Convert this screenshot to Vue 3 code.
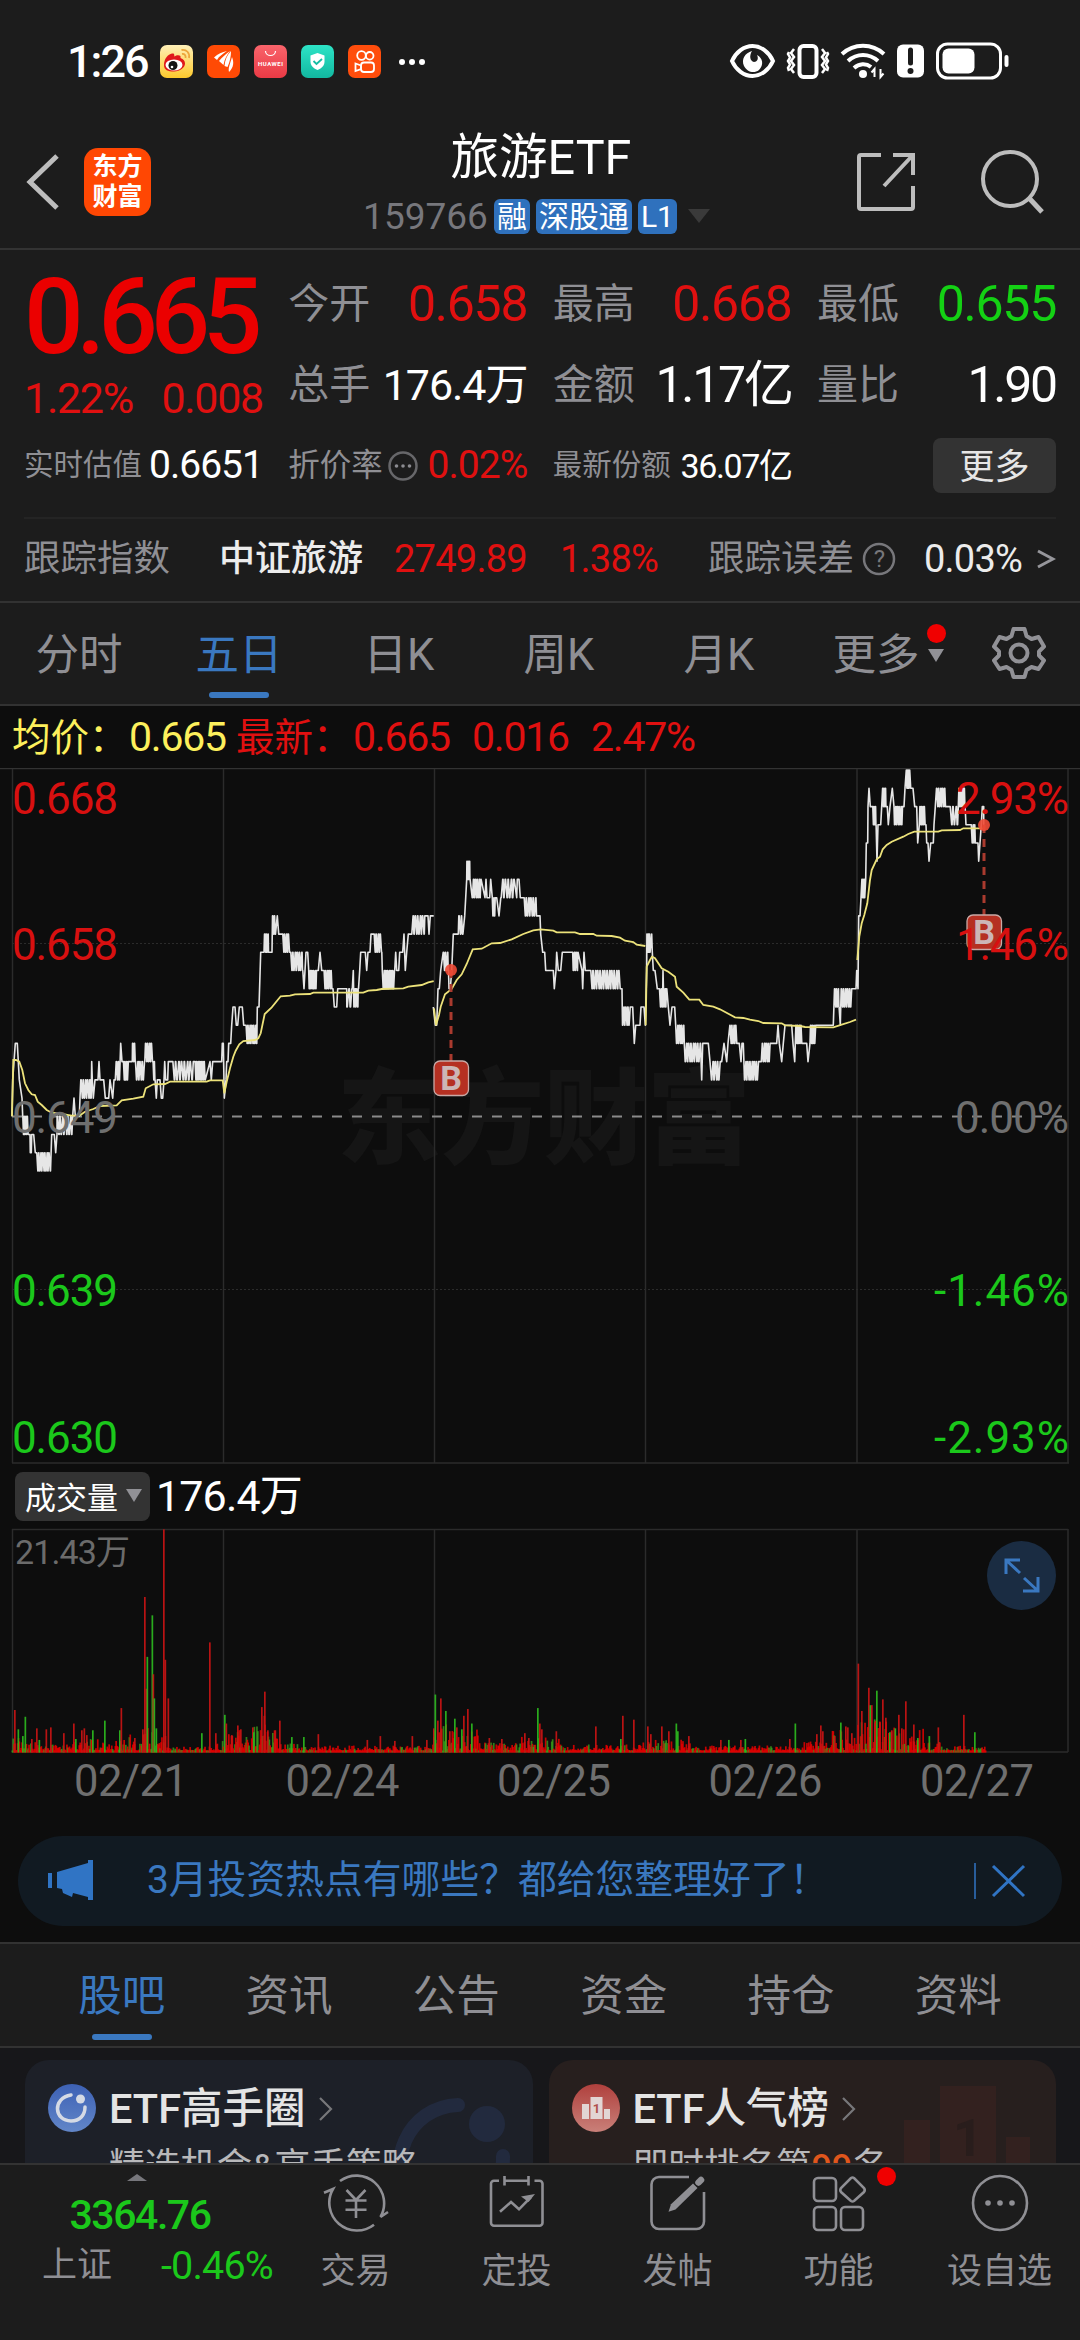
<template>
  <div class="screen">
    <header class="status">
      <div class="status__left">
        <span class="status__time">1:26</span>
        <svg class="status__app" viewBox="0 0 33 33">
          <defs>
            <linearGradient id="weibo" x2="0" y2="1">
              <stop stop-color="#fff0b8" />
              <stop offset="1" stop-color="#fdc92c" />
            </linearGradient>
          </defs>
          <rect width="33" height="33" rx="7" fill="url(#weibo)" />
          <path d="M4 20C4 14 8 9 12 8.500c3-.5 2 2 2.500 3 2-1.500 7-2 6 1.500 3 1 4.500 3 4.500 5.500 0 4-5 8-11 8S4 25 4 20z" fill="#e0181b" />
          <ellipse cx="14" cy="20" rx="8.500" ry="5.500" fill="#fff" />
          <circle cx="13" cy="20.500" r="4.500" fill="#151515" />
          <circle cx="12" cy="22" r="1.300" fill="#fff" />
          <path d="M22 9c2.500-.5 4 1.500 3.500 4M21.500 5c5-1 8.500 3 7.500 8" fill="none" stroke="#eda63a" stroke-width="1.800" />
        </svg>
        <svg class="status__app" viewBox="0 0 33 33">
          <rect width="33" height="33" rx="7" fill="#ff4a05" />
          <path d="M7 12.500c4-4 8-5.500 13-6.500-4 3-8 5-10 9zM12 16c3-4 7-7 11-10-3 4-5.500 8-6.500 14zM17.500 21C18 15 20 10 24 6c0 5-1 11-3.500 16zM22 27c-1-4 1-8 3-15 2 5 2 10-3 15z" fill="#fff" />
        </svg>
        <svg class="status__app" viewBox="0 0 33 33">
          <defs>
            <linearGradient id="huawei" x2="0" y2="1">
              <stop stop-color="#f9646b" />
              <stop offset="1" stop-color="#ea3a45" />
            </linearGradient>
          </defs>
          <rect width="33" height="33" rx="7" fill="url(#huawei)" />
          <path d="M11.500 6c0 6 10 6 10 0" fill="none" stroke="#fff" stroke-width="1.200" />
          <text x="16.500" y="21" text-anchor="middle" font-size="6" font-weight="700" fill="#fff" textLength="25">HUAWEI</text>
        </svg>
        <svg class="status__app" viewBox="0 0 33 33">
          <defs>
            <linearGradient id="guard" x2="0" y2="1">
              <stop stop-color="#2de3c6" />
              <stop offset="1" stop-color="#12b8a0" />
            </linearGradient>
          </defs>
          <rect width="33" height="33" rx="7" fill="url(#guard)" />
          <path d="M16.500 8l7 2.500v6c0 4-2.500 6.500-7 8.500-4.500-2-7-4.500-7-8.500v-6z" fill="#fff" />
          <path d="M12.500 16l3 3 5.500-5" fill="none" stroke="#16bda5" stroke-width="1.800" />
        </svg>
        <svg class="status__app" viewBox="0 0 33 33">
          <rect width="33" height="33" rx="7" fill="#ff4d0c" />
          <g fill="none" stroke="#fff" stroke-width="1.800">
            <circle cx="13.500" cy="10.500" r="4.300" />
            <circle cx="21.700" cy="10.800" r="3.800" />
            <rect x="13" y="17.500" width="13" height="9.500" rx="3" />
            <path d="M13 20.500l-5.500-2v7.500l5.500-2z" />
          </g>
        </svg>
        <span class="status__more"><i></i><i></i><i></i></span>
      </div>
      <svg class="status__right" width="282" height="40" viewBox="728 41 282 40">
        <path d="M732 61c4-9 12-15 20.500-15S769 52 773 61c-4 9-12 15-20.500 15S736 70 732 61z" fill="none" stroke="#fff" stroke-width="4" />
        <path d="M752 51c-7 2-11 8-8 15 3 6 10 8 15 4 5-5 4-12-2-15 2 4 0 7-3 7-4-1-5-6-2-11z" fill="#fff" />
        <rect x="799.500" y="46" width="17" height="31" rx="4" fill="none" stroke="#fff" stroke-width="4" />
        <path d="M794 49l-3 4 3 4-3 4 3 4-3 4 3 4M789 52l-1 2 2 3.500-2 3.500 2 3.500-2 3.500 1 3M822 49l3 4-3 4 3 4-3 4 3 4-3 4M827 52l1 2-2 3.500 2 3.500-2 3.500 2 3.500-1 3" fill="none" stroke="#fff" stroke-width="2.500" />
        <g fill="none" stroke="#fff" stroke-width="4">
          <path d="M842 54c12-11 30-11 42 0" />
          <path d="M848 61c9-8 21-8 30 0" />
          <path d="M854 68c5-4.500 12-5 17-1" />
        </g>
        <circle cx="863" cy="74" r="4" fill="#fff" />
        <path d="M874.500 77v-8l-3 3.500M880.500 69v8l3-3.500" fill="none" stroke="#fff" stroke-width="2" />
        <rect x="897" y="44.500" width="27" height="33" rx="6" fill="#fff" />
        <path d="M910.500 50v13" stroke="#1c1c1c" stroke-width="5" stroke-linecap="round" />
        <circle cx="910.500" cy="71" r="3" fill="#1c1c1c" />
        <rect x="937.500" y="44" width="63" height="34" rx="10" fill="none" stroke="#fff" stroke-width="3" />
        <rect x="942.500" y="48.500" width="32" height="25" rx="6" fill="#fff" />
        <path d="M1006.500 57v8" stroke="#fff" stroke-width="4" stroke-linecap="round" />
      </svg>
    </header>

    <div class="header">
      <div class="header__side">
        <svg width="34" height="58" viewBox="0 0 34 58">
          <path d="M32 3L5 29l27 26" fill="none" stroke="#bdbdbd" stroke-width="5" />
        </svg>
        <div class="header__logo"><span>东方</span><span>财富</span></div>
      </div>
      <div class="header__title">
        <h1>旅游ETF</h1>
        <p>
          <span class="header__code">159766</span>
          <b>融</b><b>深股通</b><b>L1</b>
          <i class="arrow"></i>
        </p>
      </div>
      <div class="header__side header__side--right">
        <svg width="60" height="60" viewBox="0 0 60 60" fill="none" stroke="#bdbdbd" stroke-width="4">
          <path d="M25 3H5a2 2 0 00-2 2v50a2 2 0 002 2h50a2 2 0 002-2V34M37 3h20v20M56 4L28 34" />
        </svg>
        <svg width="64" height="64" viewBox="0 0 64 64" fill="none" stroke="#bdbdbd" stroke-width="4">
          <circle cx="30" cy="29" r="27" />
          <path d="M49 48l13 14" stroke-width="5" />
        </svg>
      </div>
    </div>

    <section class="quote">
      <div class="quote__grid">
        <div class="quote__main">
          <strong>0.665</strong>
          <p><span>1.22%</span><span>0.008</span></p>
        </div>
        <div v-for="item in stats" :key="item.label" class="stat">
          <span class="stat__label">{{ item.label }}</span>
          <span class="stat__value" :class="item.cls">{{ item.value }}</span>
        </div>
        <div class="stat stat--small">
          <span class="stat__label">实时估值</span><span class="stat__value mid">0.6651</span>
        </div>
        <div class="stat stat--small">
          <span class="stat__label stat__label--wide">折价率</span>
          <svg class="stat__hint" width="30" height="30" viewBox="0 0 30 30">
            <circle cx="15" cy="15" r="13.500" fill="none" stroke="#67676a" stroke-width="2.500" />
            <g fill="#8b8b90"><circle cx="8.500" cy="15" r="1.800" /><circle cx="15" cy="15" r="1.800" /><circle cx="21.500" cy="15" r="1.800" /></g>
          </svg>
          <span class="stat__value red mid">0.02%</span>
        </div>
        <div class="stat stat--small">
          <span class="stat__label">最新份额</span><span class="stat__value tiny">36.07亿</span>
        </div>
        <div class="stat stat--end"><button class="quote__more">更多</button></div>
      </div>
      <div class="track">
        <span class="track__label">跟踪指数</span>
        <span class="track__name">中证旅游</span>
        <span class="red track__num">2749.89</span>
        <span class="red track__pct">1.38%</span>
        <span class="track__label">跟踪误差</span>
        <svg class="track__hint" width="34" height="34" viewBox="0 0 34 34">
          <circle cx="17" cy="17" r="15" fill="none" stroke="#77777b" stroke-width="2.500" />
          <text x="17" y="25" text-anchor="middle" font-size="24" fill="#77777b">?</text>
        </svg>
        <span class="track__err">0.03%</span>
        <svg class="track__go" width="20" height="20" viewBox="0 0 20 20">
          <path d="M2 2l15 8-15 8" fill="none" stroke="#96969b" stroke-width="3" />
        </svg>
      </div>
    </section>

    <nav class="periods">
      <span v-for="p in periods" :key="p" :class="{ active: p === '五日' }">{{ p }}</span>
      <span class="periods__more">更多<i class="arrow"></i><em class="dot"></em></span>
      <svg width="54" height="54" viewBox="0 0 54 54" fill="none" stroke="#919196" stroke-width="4" stroke-linejoin="round">
        <path d="M21.500 3h11l2 7 5 3 7-2 5.500 9.500-5 5v4l5 5L46.500 43l-7-2-5 3-2 7h-11l-2-7-5-3-7 2L2 34.500l5-5v-4l-5-5L7.500 11l7 2 5-3z" />
        <circle cx="27" cy="27" r="8.500" />
      </svg>
    </nav>

    <section class="market">
      <div class="legend">
        <span class="legend__cn yellow">均价：</span><span class="legend__num legend__avg yellow">0.665</span>
        <span class="legend__cn red">最新：</span><span class="legend__num red">0.665</span>
        <span class="legend__num red">0.016</span><span class="legend__num red">2.47%</span>
      </div>

      <svg class="chart" width="1080" height="698" viewBox="0 768 1080 698">
        <text x="337" y="1156" textLength="414" font-size="104" font-weight="900" fill="#151515">东方财富</text>
        <g stroke="#2b2b2b" stroke-width="1.500">
          <path d="M0 768.500H1080" stroke="#333" />
          <path v-for="x in dayEdges" :key="x" :d="`M${x} 769V1463`" />
          <path d="M12 1463H1069" />
          <path d="M12 943.500H1068M12 1289.500H1068" stroke-dasharray="2 2" stroke-width="1" />
        </g>
        <path d="M12 1116.500H1068" stroke="#8a8a8a" stroke-width="2" stroke-dasharray="10 10" />
        <path v-for="(d, i) in priceLines" :key="'p' + i" :d="d" class="chart__price" />
        <path v-for="(d, i) in avgLines" :key="'a' + i" :d="d" class="chart__avg" />
        <g v-for="m in marks" :key="m.x">
          <path :d="`M${m.x} ${m.top}V${m.box}`" stroke="#a93a2e" stroke-width="3" stroke-dasharray="8 6" />
          <circle :cx="m.x" :cy="m.top" r="6" fill="#f04a35" fill-opacity=".9" />
          <rect :x="m.x - 17" :y="m.box" width="34.500" height="34.500" rx="6" fill="#b53022" stroke="#c9a9a6" stroke-width="1.300" />
          <text :x="m.x" :y="m.box + 29" text-anchor="middle" font-size="34" font-weight="700" fill="#ccb6b6">B</text>
        </g>
        <g font-size="44">
          <template v-for="r in scale" :key="r.price">
            <text x="12" :y="r.y" textLength="106" :fill="r.color">{{ r.price }}</text>
            <text x="1069" :y="r.y" text-anchor="end" :textLength="r.w" :fill="r.color">{{ r.pct }}</text>
          </template>
        </g>
      </svg>

      <div class="volhead">
        <button>成交量<i class="arrow"></i></button>
        <span>176.4万</span>
      </div>

      <div class="volume">
        <svg width="1080" height="227" viewBox="0 1527 1080 227">
          <g stroke="#2b2b2b" stroke-width="1.500">
            <path d="M12 1529.500H1068M12 1752H1068" />
            <path v-for="x in dayEdges" :key="x" :d="`M${x} 1529V1752`" />
          </g>
          <rect v-for="(b, i) in bars" :key="i" :x="b.x" :y="1752.5 - b.h" width="1.700" :height="b.h" :fill="b.c" :fill-opacity="b.o" />
          <text x="15" y="1564" font-size="34" textLength="115" fill="#6b6b6b">21.43万</text>
        </svg>
        <button class="volume__expand">
          <svg width="36" height="36" viewBox="0 0 36 36" fill="none" stroke="#3a78c0" stroke-width="3">
            <path d="M2 17V3h14M3 4l13 12M34 20v14H19M33 33L20 21" />
          </svg>
        </button>
      </div>
      <div class="dates"><span v-for="d in dates" :key="d">{{ d }}</span></div>

      <div class="banner">
        <svg width="46" height="42" viewBox="0 0 46 42" fill="#3074c4">
          <path d="M0 13h4v15H0zM9 12L40 3V0h5v40h-5v-3l-15-4-1 4-9-4-1-4-5-1z" />
        </svg>
        <p>3月投资热点有哪些？都给您整理好了！</p>
        <svg class="banner__close" width="52" height="38" viewBox="0 0 52 38" fill="none" stroke="#3074c4">
          <path d="M1 1v36" stroke-width="1.500" />
          <path d="M19 4l31 30M50 4L19 34" stroke-width="3" />
        </svg>
      </div>
    </section>

    <nav class="sections">
      <span v-for="s in sections" :key="s" :class="{ active: s === '股吧' }">{{ s }}</span>
    </nav>

    <section class="cards">
      <article class="card card--blue">
        <svg class="card__ghost" width="150" height="130" viewBox="0 0 150 130">
          <path d="M75 23C25 25 0 80 28 130" fill="none" stroke="#222a3e" stroke-width="14" stroke-linecap="round" />
          <path d="M120 74c0 22-5 38-20 54" fill="none" stroke="#222a3e" stroke-width="14" stroke-linecap="round" />
          <circle cx="104" cy="42" r="18" fill="#222a3e" />
        </svg>
        <svg class="card__icon" viewBox="0 0 48 48">
          <defs>
            <linearGradient id="ring" x2="0" y2="1">
              <stop stop-color="#3d61b5" />
              <stop offset="1" stop-color="#6286c8" />
            </linearGradient>
          </defs>
          <circle cx="24" cy="24" r="24" fill="url(#ring)" />
          <path d="M23 11C4 14 6 37 23 37c9 0 14-6 14-14" fill="none" stroke="#d5dae5" stroke-width="3.500" stroke-linecap="round" />
          <circle cx="32.500" cy="15" r="4.500" fill="#d5dae5" />
        </svg>
        <div>
          <h2>ETF高手圈<svg width="16" height="24" viewBox="0 0 16 24"><path d="M2 1l11 11L2 23" fill="none" stroke="#77777a" stroke-width="2.200" /></svg></h2>
          <p>精选机会&amp;高手策略</p>
        </div>
      </article>
      <article class="card card--red">
        <svg class="card__ghost" width="170" height="130" viewBox="0 0 170 130" fill="#33211f">
          <path d="M18 60h26v70H18zM54 26h56v104H54zM120 77h24v53h-24z" />
          <text x="82" y="96" font-size="52" font-weight="700" text-anchor="middle" fill="#291d1c">1</text>
        </svg>
        <svg class="card__icon" viewBox="0 0 48 48">
          <defs>
            <linearGradient id="rank" x2="0" y2="1">
              <stop stop-color="#b0403d" />
              <stop offset="1" stop-color="#c98079" />
            </linearGradient>
          </defs>
          <circle cx="24" cy="24" r="24" fill="url(#rank)" />
          <path d="M10 20h7v15h-7zM18.500 13h12v22h-12zM32 25h6v10h-6z" fill="#e2d5d4" />
          <text x="24.500" y="29" font-size="13" font-weight="700" text-anchor="middle" fill="#b0504b">1</text>
        </svg>
        <div>
          <h2>ETF人气榜<svg width="16" height="24" viewBox="0 0 16 24"><path d="M2 1l11 11L2 23" fill="none" stroke="#77777a" stroke-width="2.200" /></svg></h2>
          <p>即时排名第<b>99</b>名</p>
        </div>
      </article>
    </section>

    <footer class="tabbar">
      <div class="tabbar__index">
        <i class="tabbar__up"></i>
        <strong>3364.76</strong>
        <p><span>上证</span><em>-0.46%</em></p>
      </div>
      <div class="tabbar__item">
        <svg viewBox="0 0 66 60">
          <path d="M17 7A27.700 27.700 0 0157.500 43l7.500-5M51 50.700A27.700 27.700 0 0110 15l-9 3.700" />
          <path d="M23.500 16l9.500 10 9.500-10M33 26v18M22.500 26.500h21M22.500 35.700h21" />
        </svg>
        <span>交易</span>
      </div>
      <div class="tabbar__item">
        <svg viewBox="0 0 66 60">
          <path d="M15 6.700h-5a3 3 0 00-3 3v39a3 3 0 003 3h45.500a3 3 0 003-3v-39a3 3 0 00-3-3h-5M20.500 2v9.500M44.500 2v9.500M20.500 6.700h24M16 37.700L27 28l8 7.300L47 23" />
          <path d="M37 22.500l14-2.500-6.500 8z" fill="#8f8f94" stroke="none" />
        </svg>
        <span>定投</span>
      </div>
      <div class="tabbar__item">
        <svg viewBox="0 0 66 60">
          <path d="M44 3H14a7.500 7.500 0 00-7.500 7.500v37A7.500 7.500 0 0014 55h37.500a7.500 7.500 0 007.500-7.500V18" />
          <path d="M23.500 37.700l2.500-7.500L48 9.500l4.500 4.500-22 21.500z" fill="#8f8f94" stroke="none" />
          <path d="M53.500 8.500l2.500-2.500" stroke-width="6.500" stroke-linecap="round" />
        </svg>
        <span>发帖</span>
      </div>
      <div class="tabbar__item">
        <svg viewBox="0 0 66 60">
          <rect x="8" y="4" width="22" height="23" rx="4" />
          <rect x="8" y="33" width="22" height="23" rx="4" />
          <rect x="35" y="33" width="22" height="23" rx="4" />
          <path d="M45 4q1.500-1 3 0l10 10q1.500 2 0 4L48 27q-1.500 1-3 0L35 18q-1.500-2 0-4z" />
        </svg>
        <em class="dot"></em>
        <span>功能</span>
      </div>
      <div class="tabbar__item">
        <svg viewBox="0 0 66 60">
          <circle cx="33" cy="29" r="27" />
          <g fill="#8f8f94" stroke="none"><circle cx="21" cy="29" r="2.800" /><circle cx="33" cy="29" r="2.800" /><circle cx="45" cy="29" r="2.800" /></g>
        </svg>
        <span>设自选</span>
      </div>
    </footer>
  </div>
</template>

<script setup>
const stats = [
  { label: "今开", value: "0.658", cls: "red" },
  { label: "最高", value: "0.668", cls: "red" },
  { label: "最低", value: "0.655", cls: "green" },
  { label: "总手", value: "176.4万", cls: "compact" },
  { label: "金额", value: "1.17亿", cls: "wide" },
  { label: "量比", value: "1.90", cls: "wide" },
];
const periods = ["分时", "五日", "日K", "周K", "月K"];
const sections = ["股吧", "资讯", "公告", "资金", "持仓", "资料"];
const dates = ["02/21", "02/24", "02/25", "02/26", "02/27"];
const dayEdges = [12.5, 223.5, 434.5, 645.5, 857, 1068];

const RED = "#d81010";
const GREEN = "#1bc81b";
const GREY = "#6f6f6f";
const scale = [
  { price: "0.668", pct: "2.93%", y: 814, w: 113, color: RED },
  { price: "0.658", pct: "1.46%", y: 960, w: 113, color: RED },
  { price: "0.649", pct: "0.00%", y: 1132.5, w: 114, color: GREY },
  { price: "0.639", pct: "-1.46%", y: 1306, w: 135, color: GREEN },
  { price: "0.630", pct: "-2.93%", y: 1452.5, w: 135, color: GREEN },
];
const marks = [
  { x: 451, top: 970, box: 1061 },
  { x: 984, top: 825, box: 915 },
];

// Each token is "x,level"; "x1-x2,a,b,n" swings n times between levels a and b.
// Level 0 is yesterday's close, one level is 0.001.
const priceData = [
  [0, "36,0 38,2 46,4 52,4 58,2 66,1 68,0 68-84,0,-1,4 90,-1 91,-2 94,-2 95,-1 101,-1 106,-2 110-150,-2,-3,7 155,-1 163,-1 167,-2 171,-1 172-215,0,-1,6 218,0 222,1 226,0 238,0 240,1 243-273,2,1,5 275,3 277,2 280,1 285,2 294,2 297,3 300,2 311,2 316,1 326,1 330,2 338,1 342,2 346,2 349-358,3,2,2 362,4 366,3 370-382,3,2,3 385,3 397,3 398-406,4,3,2 410-433,2,3,4 437-457,4,3,4 459-465,3,2,2 469,1 472,2 480,2 484,1 488,1 492,2 494,3 497,2 503,2 505,3 518-575,3,2,7 580,3 585-615,3,2,7 630,3 634,2 638,3 665,3 667,4 670,4 673,1 678,2 680,3 684,3 686,4 692,4 695,5 699,6 705,6 709,5 713,5 718,6 727,6 731,5 738-770,5,4,6 772,6 777,6 782,9 792,9 794-806,10,9,3 816,9 818-826,11,10,2 832,11 836,10 848-868,10,9,4 872-908,9,8,6 912,7 915,8 918,9 923,9 926,8 928-950,7,8,5 955,8 960,9 965,8 972-996,8,7,5 999,7 1003,6 1010,6 1013,7 1040,7 1041-1056,6,7,2 1060,8 1062-1075,6,7,3 1079,8 1082,9 1096,9 1100,8 1104,9 1110,9 1113,10 1122-1144,10,9,4 1147,8 1150-1183,7,8,7 1187,9 1190,8 1196,8 1199,9 1208,9 1212,10 1216,8 1220,9 1225,10 1235-1275,10,11,6 1284,11 1287,10 1291,11 1301,11"],
  [420, "40,6 46,5 50,5 54,7 58,7 62,8 70-85,9,8,3 87,7 91,7 95,8 100,10 115,10 117-128,11,10,2 134,11 137,12 140,13 141-150,14,13,3 157-183,12,13,5 195,12 198,13 201,12 209,12 212,13 217,12 219-226,11,12,2 230,12 237,11 243-282,12,13,5 290,12 292,13 297,13 301,12 312-350,12,11,6 360,11 362,10 368,9 374,9 377,8 400,8 403,7 408,8 410,9 415,8 422,8 427,9 458,9 460-474,8,9,3 486,8 488,7 492,9 496,8 509,8 512-600,8,7,13 606,7 608-630,5,6,4 638,6 643,4 647,5 660,5 663,6 672,6 676,5 680,8 681-690,10,9,3 695,10 697,9 700,8 705,8 712,7 718-727,7,6,2 729,8 732-740,6,7,2 745,6 750,5 756,6 764,6 767,5 770-790,4,5,4 793,4 796-840,3,4,7 845,2 848,4 865,4 870,3 875-900,2,3,4 905,3 912,4 920,3 924,4 930-950,5,4,4 958,4 963,3 966,4 970,4 974-1015,2,3,7 1020,3 1024,3 1027,4 1030-1050,3,4,4 1070,4 1074,5 1078,4 1085,3 1090,4 1095,5 1115,5 1119,4 1124,3 1128-1145,5,4,4 1160,4 1164,3 1170,4 1172-1184,5,4,3 1187,5 1240,5 1244-1257,7,6,3 1261,5 1264-1292,7,6,5 1295,7 1308,7 1310,8 1314,7 1316,11 1320,11 1323,12 1326-1334,13,12,3 1337,13 1339,15 1343,15 1344,17 1347,18 1351,17 1358-1368,17,16,3 1371,14 1374,16 1382,16 1385,17 1388-1398,18,17,3 1402,17 1405,16 1410,17 1417,18 1422,17 1424-1448,16,17,5 1452,17 1455,18 1459-1467,19,18,3 1469,19 1472,18 1479,18 1484,17 1490,17 1493,15 1498,16 1500-1515,17,16,4 1518,16 1520,15 1524,15 1527,14 1532,15 1540,15 1542,16 1546,17 1550-1577,18,17,5 1590-1612,17,16,3 1615,17 1617-1635,18,17,5 1638,16 1654,16 1657-1664,15,16,2 1666,15 1674,15 1676,14 1680,15 1684,16 1687,17 1691,17 1691,16"],
];

function toPath(offset, data) {
  const pts = [];
  for (const token of data.split(" ")) {
    const m = token.match(/^(\d+)-(\d+),(-?\d+),(-?\d+),(\d+)$/);
    if (!m) {
      pts.push(token.split(",").map(Number));
      continue;
    }
    const [x1, x2, a, b, n] = m.slice(1).map(Number);
    const step = (x2 - x1) / (n * 2 - 1);
    for (let i = 0; i < n * 2; i++) {
      // uneven rhythm, every third swing leans to one side
      const x = x1 + i * step + (i % 3 === 1 ? step * 0.3 : 0);
      const level = i % 2 ? b : a;
      pts.push([x - step * 0.15, level], [x + step * 0.15, level]);
    }
  }
  return "M" + pts.map(([x, k]) => `${(offset + x / 3).toFixed(1)} ${(1116.3 - k * 18.22).toFixed(1)}`).join("L");
}
const priceLines = priceData.map(([offset, data]) => toPath(offset, data));

const avgData = [
  [0, "36,1069 40,900 48,900 58,905 67,930 75,970 85,990 95,1003 105,1005 113,1025 125,1035 140,1050 155,1058 185,1062 215,1067 240,1066 255,1055 280,1047 300,1038 350,1036 365,1021 400,1016 430,1010 437,985 460,973 495,972 510,965 620,965 630,961 668,961 673,1000 680,965 690,925 700,890 707,872 718,853 730,843 765,840 775,835 782,820 794,762 815,742 842,709 870,707 885,703 930,702 940,698 1090,698 1105,692 1130,690 1145,687 1210,685 1225,680 1265,675 1285,667 1301,663"],
  [420, "42,745 48,796 57,765 62,740 75,703 95,687 110,660 125,643 140,612 158,568 185,566 215,550 240,549 275,538 310,522 340,511 362,508 400,512 410,517 465,517 480,522 520,522 530,527 575,528 600,533 615,542 640,546 650,554 676,558"],
  [420, "677,796 680,620 690,600 696,590 705,595 725,625 745,635 765,650 770,680 790,698 808,719 838,719 850,735 880,740 900,748 945,772 970,774 990,779 1015,783 1030,789 1085,790 1095,796 1140,798 1155,801 1240,802 1265,794 1290,786 1308,779"],
  [780, "232,600 238,530 245,490 253,465 262,430 270,360 275,330 290,298 300,290 308,268 320,255 335,245 370,230 385,222 403,215 475,215 485,211 540,210 550,205 608,205"],
];
const avgLines = avgData.map(
  ([offset, data]) =>
    "M" +
    data
      .split(" ")
      .map((p) => p.split(",").map(Number))
      .map(([x, y]) => `${(offset + x / 3).toFixed(1)} ${(760 + y / 3).toFixed(1)}`)
      .join("L")
);

// Quiet minutes: low bars with a busier level in some ranges, [from, to, max height].
const activity = [
  [12, 40, 13], [40, 70, 6], [70, 100, 12], [100, 120, 10], [120, 142, 16], [142, 150, 28], [150, 160, 20],
  [160, 166, 18], [166, 210, 4], [210, 224, 12], [224, 250, 22], [250, 278, 26], [278, 300, 8], [300, 430, 5],
  [430, 480, 28], [480, 515, 8], [515, 540, 14], [540, 560, 13], [560, 640, 6], [640, 690, 11], [690, 800, 5],
  [800, 830, 9], [830, 856, 22], [856, 870, 34], [870, 895, 32], [895, 925, 22], [925, 945, 9], [945, 985, 5],
];
let seed = 37;
function rand() {
  seed = (seed * 16807) % 2147483647;
  return seed / 2147483647;
}
const bars = [];
for (let x = 11.5; x < 985.5; x += 0.88) {
  const max = activity.find(([a, b]) => x < b)?.[2] ?? 4;
  const h = 2 + Math.pow(rand(), 2) * max;
  const up = rand() < 0.76;
  bars.push({ x: x.toFixed(1), h, c: up ? "#e60000" : "#3ba51b", o: up ? 0.85 : 0.75 });
}
// Tall bars, "x,height"; a trailing g marks a falling minute.
const spikes =
  "14,44 17.5,24g 22,17g 24.5,37g 31,14 36,25 38.5,13g 45.5,24 50,26 63,20 73,30 75,14g 81,23 83.5,25 86,18 92,23g 104,33g 119,23g 120.5,46 134,15 142,24 144,161 145.5,66 146.5,99g 151.5,142g 152.5,81 153.5,56g 155.5,25g 163,231 164.5,96 167.5,56 201,20g 209,114 215,20 224,39g 225.5,30 231,18 237,28 240,24 252,26 253,21g 261,47 263.5,38 264,63 267,23 274.5,23 279,33 291,16g 303,16g 317.5,19 366.5,13 379.5,17 394,12 411.5,17 426,13 433,25 434.5,60g 437,33 440,56 445,43g 449,22 454,35g 456,26 461,24g 463,38 467,45 471,30g 488.5,15 501,14 524,20 528,15 537,46g 539,30 541,24 555.5,22 595,27 620,14g 622,38 633,34 647,27 650,19 661,27 668,22 675.5,30g 677,22g 688,17 720,13 728,13g 740,13 744.5,14g 789,14 794.5,30g 816,19 820,28 822,22 834,17 840,31g 845,27 847,26 851,20 857.5,92 861,43 868,67 869.5,49g 871,49 874,31 876,64g 879,32 882,55 885,36 889,21g 891,23 894.5,25g 898,39 901,25 905,53 913,29 917,15g 928.5,17g 937.5,26 963,39 974,21g";
for (const token of spikes.split(" ")) {
  const [x, h] = token.split(",");
  const down = h.endsWith("g");
  bars.push({ x, h: parseFloat(h) * 0.966, c: down ? "#2bb81e" : "#c81414", o: 0.92 });
}
</script>

<style>
body {
  background: #1c1c1c;
}
</style>

<style scoped>
.screen {
  display: flex;
  flex-direction: column;
  width: 1080px;
  height: 2340px;
  overflow: hidden;
  background: #1c1c1c;
  color: #fff;
  font-family: Roboto, "Noto Sans CJK SC", sans-serif;
  line-height: 1;
}

.screen * {
  box-sizing: border-box;
}

h1,
h2,
p {
  margin: 0;
  font-weight: 400;
}

i,
em {
  font-style: normal;
}

button {
  border: 0;
  padding: 0;
  color: inherit;
  font-family: inherit;
}

svg {
  display: block;
  flex: none;
}

.red {
  color: #e01010;
}

.green {
  color: #14d114;
}

.yellow {
  color: #fdf05c;
}

.arrow {
  border: 8px solid transparent;
  border-top: 13px solid #919196;
  border-bottom: 0;
}

.dot {
  position: absolute;
  width: 19px;
  height: 19px;
  border-radius: 50%;
  background: #f00000;
}

.status {
  display: flex;
  justify-content: space-between;
  height: 112px;
  padding: 41px 70px 0 67px;
}

.status__left {
  display: flex;
  align-items: center;
  gap: 14px;
  height: 41px;
}

.status__time {
  width: 79px;
  font-size: 45px;
  font-weight: 500;
  letter-spacing: -0.045em;
}

.status__app {
  width: 33px;
  height: 33px;
}

.status__more {
  display: flex;
  gap: 4px;
  margin-left: 4px;
}

.status__more i {
  width: 6px;
  height: 6px;
  border-radius: 50%;
  background: #fff;
}

.header {
  display: grid;
  grid-template-columns: 330px 1fr 330px;
  height: 138px;
  padding: 0 36px 0 25px;
  border-bottom: 2px solid #333;
}

.header__side {
  display: flex;
  align-items: center;
  gap: 25px;
  height: 140px;
}

.header__side--right {
  justify-content: flex-end;
  gap: 64px;
}

.header__logo {
  display: flex;
  flex-direction: column;
  align-items: center;
  justify-content: center;
  gap: 5px;
  width: 67px;
  height: 68px;
  border-radius: 14px;
  background: #ff4703;
  font-size: 25px;
  font-weight: 700;
}

.header__title {
  text-align: center;
}

.header__title h1 {
  margin-top: 22px;
  margin-left: 13px;
  font-size: 48.500px;
}

.header__title p {
  display: flex;
  align-items: center;
  justify-content: center;
  gap: 6px;
  margin-top: 16px;
  margin-left: 4px;
  height: 36px;
}

.header__code {
  color: #77777c;
  font-size: 37px;
}

.header__title b {
  height: 35px;
  padding: 0 3px;
  border-radius: 6px;
  background: #2f71bd;
  font-size: 30px;
  font-weight: 400;
  line-height: 35px;
}

.header__title .arrow {
  margin-left: 5px;
  border-width: 14px 11px 0;
  border-top-color: #3a3a3a;
}

.quote {
  height: 351px;
  padding: 14px 24px 0;
}

.quote__grid {
  display: grid;
  grid-template-columns: repeat(4, 239px);
  grid-template-rows: 81px 81px 80px;
  justify-content: space-between;
}

.quote__main {
  grid-row: span 2;
  color: #eb0000;
}

.quote__main strong {
  display: block;
  font-size: 105px;
  font-weight: 500;
  line-height: 108px;
  letter-spacing: -0.07em;
}

.quote__main p {
  display: flex;
  justify-content: space-between;
  margin-top: 5px;
  color: #e01010;
  font-size: 43px;
  letter-spacing: -0.03em;
}

.stat {
  display: flex;
  align-items: center;
  justify-content: space-between;
  white-space: nowrap;
}

.stat--end {
  justify-content: flex-end;
}

.stat__label {
  color: #8f8f94;
  font-size: 41px;
}

.stat__value {
  font-size: 50px;
  letter-spacing: -0.025em;
}

.stat__value.compact {
  font-size: 43px;
}

.stat__value.wide {
  letter-spacing: -0.045em;
}

.stat__value.mid {
  font-size: 39px;
}

.stat__value.tiny {
  font-size: 34px;
  letter-spacing: -0.04em;
}

.stat--small .stat__label {
  font-size: 29.500px;
}

.stat--small .stat__label--wide {
  font-size: 31.500px;
}

.stat__hint {
  margin-right: 4px;
}

.quote__more {
  width: 123px;
  height: 55px;
  padding-bottom: 5px;
  border-radius: 8px;
  background: #333;
  color: #e6e6e6;
  font-size: 35px;
}

.track {
  display: flex;
  align-items: center;
  margin-top: 11px;
  height: 83px;
  border-top: 2px solid #242424;
  font-size: 38px;
  letter-spacing: -0.02em;
  white-space: nowrap;
}

.track__label {
  color: #8f8f94;
  font-size: 36.500px;
  letter-spacing: 0;
}

.track__name {
  margin-left: 49px;
  color: #ececec;
  font-size: 36px;
  font-weight: 500;
  letter-spacing: 0;
}

.track__num {
  width: 166px;
  margin-left: 31px;
}

.track__pct {
  width: 148px;
}

.track__hint {
  margin-left: 8px;
}

.track__err {
  margin-left: 28px;
  color: #ececec;
}

.track__go {
  margin-left: auto;
}

.periods {
  display: grid;
  grid-template-columns: repeat(5, 160px) 154px 1fr;
  place-items: center;
  height: 105px;
  border-top: 2px solid #323232;
  border-bottom: 2px solid #323232;
  color: #8f8f94;
  font-size: 43.500px;
}

.periods span {
  left: -1px;
}

.periods > svg {
  margin-left: 4px;
}

.periods span,
.sections span {
  position: relative;
  padding-top: 4px;
}

.active {
  color: #3a78c0;
}

.active::after {
  content: "";
  position: absolute;
  left: calc(50% - 30px);
  bottom: -21px;
  width: 60px;
  height: 6px;
  border-radius: 3px;
  background: #3a78c0;
}

.periods__more .arrow {
  position: absolute;
  left: 95px;
  top: 19px;
}

.periods__more .dot {
  left: 94px;
  top: -6px;
}

.market {
  height: 1237px;
  background: #0d0d0d;
}

.legend {
  display: flex;
  align-items: center;
  height: 62px;
  padding: 2px 0 0 12px;
  white-space: nowrap;
}

.legend__cn {
  width: 117px;
  font-size: 38.500px;
}

.legend__num {
  width: 119px;
  font-size: 41px;
  letter-spacing: -0.03em;
}

.legend__avg {
  width: 107px;
}

.chart__price {
  fill: none;
  stroke: #e6e6e6;
  stroke-width: 1.6;
  stroke-linejoin: round;
}

.chart__avg {
  fill: none;
  stroke: #ece27a;
  stroke-width: 1.8;
}

.volhead {
  display: flex;
  align-items: center;
  gap: 6px;
  height: 61px;
  padding: 0 15px;
  font-size: 43px;
}

.volhead button {
  display: flex;
  align-items: center;
  gap: 8px;
  width: 135px;
  height: 49px;
  padding: 0 0 1px 10px;
  border-radius: 8px;
  background: #333;
  font-size: 31px;
}

.volhead span {
  letter-spacing: -0.02em;
}

.volume {
  position: relative;
  height: 227px;
}

.volume__expand {
  position: absolute;
  top: 14px;
  right: 24px;
  display: grid;
  place-items: center;
  width: 69px;
  height: 69px;
  border-radius: 50%;
  background: #1a2c42;
}

.dates {
  display: grid;
  grid-template-columns: repeat(5, 211.500px);
  height: 82px;
  padding: 6px 0 0 25px;
  color: #6f6f6f;
  font-size: 43.500px;
  letter-spacing: -0.01em;
  text-align: center;
}

.banner {
  display: flex;
  align-items: center;
  height: 90px;
  margin: 0 18px;
  padding: 0 36px 0 30px;
  border-radius: 45px;
  background: #111a22;
  color: #3a78c0;
}

.banner p {
  margin-left: 53px;
  font-size: 38.800px;
}

.banner__close {
  margin-left: auto;
}

.sections {
  display: grid;
  grid-template-columns: repeat(6, 1fr);
  place-items: center;
  height: 106px;
  padding: 0 38px;
  border-top: 2px solid #323232;
  border-bottom: 2px solid #323232;
  color: #8f8f94;
  font-size: 43.500px;
}

.cards {
  display: grid;
  grid-template-columns: 1fr 1fr;
  gap: 16px;
  height: 115px;
  padding: 12px 24px 0 25px;
  overflow: hidden;
  background: #17171a;
}

.card {
  position: relative;
  display: flex;
  gap: 13px;
  height: 180px;
  padding: 24px 23px;
  border-radius: 24px;
  overflow: hidden;
}

.card--blue {
  background: #1d2028;
}

.card--red {
  background: #271f1e;
}

.card__ghost {
  position: absolute;
  right: 0;
  top: 22px;
}

.card--red .card__ghost {
  top: 0;
}

.card__icon {
  position: relative;
  width: 48px;
  height: 48px;
}

.card div {
  position: relative;
}

.card h2 {
  display: flex;
  align-items: center;
  gap: 12px;
  height: 50px;
  color: #e4e4e4;
  font-size: 41.500px;
  font-weight: 500;
}

.card p {
  margin-top: 16px;
  color: #b8b8ba;
  font-size: 35.800px;
}

.card p b {
  color: #e0561c;
  font-weight: 500;
}

.tabbar {
  display: grid;
  grid-template-columns: 275px repeat(5, 161px);
  height: 177px;
  border-top: 2px solid #333;
  background: #1c1c1c;
}

.tabbar__index {
  position: relative;
  padding: 30px 0 0 42px;
  color: #1bc81b;
}

.tabbar__index strong {
  display: block;
  width: 196px;
  font-size: 41px;
  font-weight: 500;
  letter-spacing: -0.035em;
  text-align: center;
}

.tabbar__index p {
  display: flex;
  align-items: center;
  justify-content: space-between;
  width: 231px;
  margin-top: 10px;
  font-size: 39.500px;
  letter-spacing: -0.02em;
}

.tabbar__index p span {
  color: #8f8f94;
  font-size: 35px;
  letter-spacing: 0;
}

.tabbar__up {
  position: absolute;
  top: 9px;
  left: 127px;
  border: 10px solid transparent;
  border-bottom: 7px solid #77777c;
  border-top: 0;
}

.tabbar__item {
  position: relative;
  display: flex;
  flex-direction: column;
  align-items: center;
  gap: 20px;
  padding-top: 9px;
  color: #8f8f94;
  font-size: 35px;
}

.tabbar__item svg {
  width: 66px;
  height: 60px;
  fill: none;
  stroke: #8f8f94;
  stroke-width: 2.6;
}

.tabbar__item .dot {
  left: 119px;
  top: 2px;
}
</style>
